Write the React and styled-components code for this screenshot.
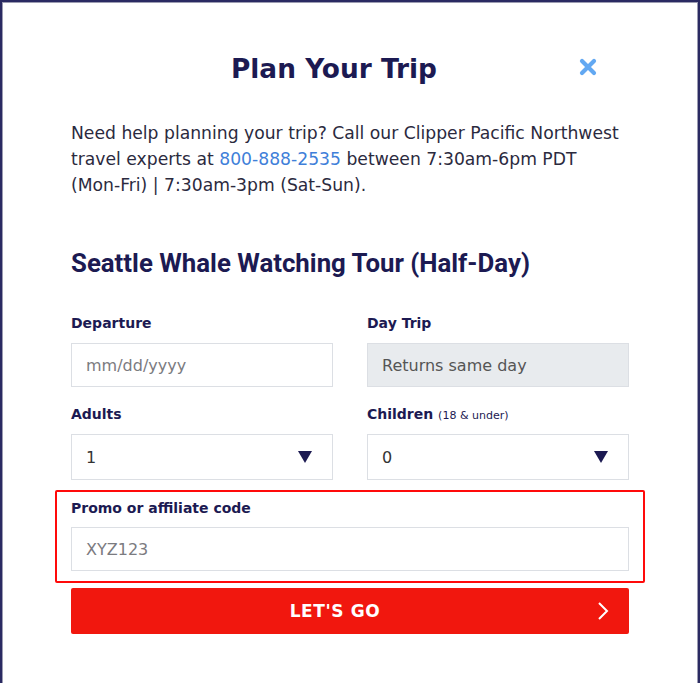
import styled, { createGlobalStyle } from 'styled-components';

const NAVY = '#1c1a52';

const GlobalStyle = createGlobalStyle`
  html, body {
    margin: 0;
    padding: 0;
    background: #2a2a62;
  }
  body {
    padding: 2px 2px 0;
    font-family: "DejaVu Sans", Verdana, sans-serif;
  }
`;

export default function App() {
  return (
    <>
      <GlobalStyle />
      <Modal>
        <Header>
          <Title>Plan Your Trip</Title>
          <CloseButton aria-label="Close">
            <svg width="18" height="18" viewBox="0 0 18 18">
              <path d="M3 3 L15 15 M15 3 L3 15" stroke="#62a8f2" strokeWidth="4.2" strokeLinecap="round" />
            </svg>
          </CloseButton>
        </Header>

        <Intro>
          Need help planning your trip? Call our Clipper Pacific Northwest travel experts at{' '}
          <PhoneLink href="#">800-888-2535</PhoneLink> between 7:30am-6pm PDT <NoWrap>(Mon-Fri)</NoWrap> | 7:30am-3pm <NoWrap>(Sat-Sun).</NoWrap>
        </Intro>

        <TourName>Seattle Whale Watching Tour (Half-Day)</TourName>

        <FieldGrid>
          <Field>
            <Label>Departure</Label>
            <TextBox>mm/dd/yyyy</TextBox>
          </Field>
          <Field>
            <Label>Day Trip</Label>
            <TextBox disabled>Returns same day</TextBox>
          </Field>
          <Field>
            <Label>Adults</Label>
            <SelectBox value="1" />
          </Field>
          <Field>
            <Label>Children <Small>(18 &amp; under)</Small></Label>
            <SelectBox value="0" />
          </Field>
        </FieldGrid>

        <PromoBox>
          <Label>Promo or affiliate code</Label>
          <TextBox>XYZ123</TextBox>
        </PromoBox>

        <GoButton>
          <span>LET'S GO</span>
          <Chevron width="12" height="20" viewBox="0 0 12 20">
            <polyline points="2,2 10,10 2,18" fill="none" stroke="#fff" strokeWidth="2" />
          </Chevron>
        </GoButton>
      </Modal>
    </>
  );
}

function SelectBox({ value }) {
  return (
    <Select>
      <Value>{value}</Value>
      <svg width="14" height="12" viewBox="0 0 14 12">
        <polygon points="0,0 14,0 7,12" fill={NAVY} />
      </svg>
    </Select>
  );
}

// ---------------------- Styled components ----------------------

const Modal = styled.div`
  box-sizing: border-box;
  min-height: 700px;
  background: #fff;
  border: 1px solid #9c9cb2;
  padding: 44px 68px 40px;
`;

const Header = styled.div`
  position: relative;
  display: flex;
  align-items: center;
`;

const Title = styled.h1`
  flex: 1;
  margin: 0;
  padding-right: 32px;
  text-align: center;
  font-family: "DejaVu Sans", Verdana, sans-serif;
  font-size: 26.4px;
  font-weight: 700;
  line-height: 44px;
  color: ${NAVY};
`;

const CloseButton = styled.button`
  position: absolute;
  right: 32px;
  top: 11px;
  padding: 0;
  border: 0;
  background: none;
  display: flex;
  cursor: pointer;
`;

const Intro = styled.p`
  margin: 29px 0 0;
  font-size: 17.2px;
  line-height: 26px;
  color: #2b2a3e;
`;

const NoWrap = styled.span`
  white-space: nowrap;
`;

const PhoneLink = styled.a`
  color: #3f7fd9;
  text-decoration: none;
`;

const TourName = styled.h2`
  margin: 50px 0 0;
  font-family: Roboto, sans-serif;
  font-size: 25.8px;
  font-weight: 700;
  line-height: 30px;
  color: ${NAVY};
`;

const FieldGrid = styled.div`
  display: grid;
  grid-template-columns: 1fr 1fr;
  column-gap: 34px;
  row-gap: 17px;
  margin-top: 35px;
`;

const Field = styled.div`
  display: flex;
  flex-direction: column;
`;

const Label = styled.div`
  height: 20px;
  font-size: 14px;
  font-weight: 700;
  line-height: 20px;
  color: ${NAVY};
  margin-bottom: 10px;
`;

const Small = styled.span`
  font-size: 11px;
  font-weight: 400;
  line-height: 1;
`;

const TextBox = styled.div`
  box-sizing: border-box;
  height: 44px;
  display: flex;
  align-items: center;
  padding: 0 14px;
  border: 1px solid #dcdfe4;
  background: ${({ disabled }) => (disabled ? '#e8ebee' : '#fff')};
  color: ${({ disabled }) => (disabled ? '#555' : '#7b7b80')};
  font-size: 16px;
`;

const Select = styled(TextBox)`
  height: 46px;
  justify-content: space-between;
  padding-right: 20px;
`;

const Value = styled.span`
  color: #333;
`;

const PromoBox = styled.div`
  margin: 10px -16px 0;
  padding: 6px 14px 10px;
  border: 2px solid #ff0a0a;
  border-radius: 2px;

  ${Label} {
    margin-bottom: 9px;
  }
`;

const GoButton = styled.button`
  position: relative;
  width: 100%;
  height: 46px;
  margin-top: 5px;
  padding: 0 30px 0 0;
  border: 0;
  border-radius: 2px;
  background: #f1170e;
  color: #fff;
  font-family: "DejaVu Sans", Verdana, sans-serif;
  font-size: 17px;
  font-weight: 700;
  letter-spacing: 0.6px;
  display: flex;
  align-items: center;
  justify-content: center;
  cursor: pointer;
`;

const Chevron = styled.svg`
  position: absolute;
  right: 20px;
  top: 13px;
`;
